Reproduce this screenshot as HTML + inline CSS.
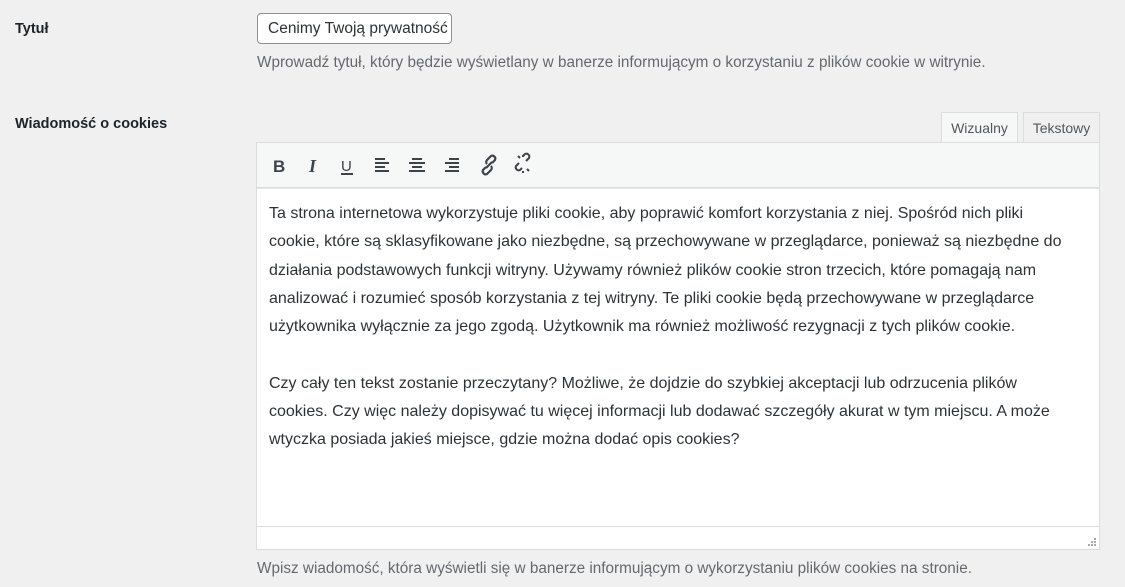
<!DOCTYPE html>
<html><head><meta charset="utf-8"><style>
body{margin:0;width:1125px;height:587px;background:#f0f0f1;font-family:"Liberation Sans",sans-serif;color:#1d2327;position:relative;overflow:hidden}
.a{position:absolute;white-space:nowrap}
.lbl{font-weight:bold;font-size:14.5px}
.desc{font-size:15.3px;color:#646970}
.input{left:257px;top:13px;width:195px;height:31px;border:1px solid #8c8f94;border-radius:4px;background:#fff;font-size:15.5px;line-height:30px;padding-left:10px;box-sizing:border-box;overflow:hidden;color:#2c3338}
.tab{top:112px;height:30px;border:1px solid #dcdcde;border-bottom:none;font-size:14px;line-height:30px;text-align:center;color:#50575e;box-sizing:border-box}
.ed{left:256px;top:142px;width:844px;height:408px;border:1px solid #dcdcde;background:#fff;box-sizing:border-box}
.tb{position:absolute;left:0;top:0;right:0;height:44px;background:#f6f7f7;border-bottom:1px solid #dcdcde;box-shadow:0 1px 0 #e6e6e6}
.txt{position:absolute;left:12px;top:57px;font-size:16px;line-height:28.3px;color:#2c3338;white-space:nowrap}
.sb{position:absolute;left:0;right:0;bottom:0;height:22px;border-top:1px solid #dcdcde;background:#fff}
svg{position:absolute}
</style></head><body>
<div class="a lbl" style="left:15px;top:21px">Tytuł</div>
<div class="a input">Cenimy Twoją prywatność</div>
<div class="a desc" style="left:257px;top:54px">Wprowadź tytuł, który będzie wyświetlany w banerze informującym o korzystaniu z plików cookie w witrynie.</div>
<div class="a lbl" style="left:15px;top:116px">Wiadomość o cookies</div>
<div class="a tab" style="left:941px;width:77px;background:#f6f7f7;height:31px">Wizualny</div>
<div class="a tab" style="left:1023px;width:77px;background:#f0f0f1">Tekstowy</div>
<div class="a ed">
<div class="tb">
<svg width="844" height="46" viewBox="0 0 844 46" fill="none" stroke="#3c434a" stroke-width="2">
<text x="16" y="29" font-family="Liberation Sans" font-weight="bold" font-size="17" fill="#3c434a" stroke="none">B</text>
<text x="52" y="29" font-family="Liberation Serif" font-style="italic" font-weight="bold" font-size="18" fill="#3c434a" stroke="none">I</text>
<text x="84" y="28" font-family="Liberation Sans" font-size="15" fill="#3c434a" stroke="none">U</text>
<line x1="84" y1="31" x2="96" y2="31"/>
<path d="M118 16h10M118 20h14M118 24h10M118 28h14"/>
<path d="M155 16h10M152 20h16M155 24h10M152 28h16"/>
<path d="M192 16h10M188 20h14M192 24h10M188 28h14"/>
<path d="M229 24l-3 3a3 3 0 0 0 4 4l4-4a3 3 0 0 0 0-4M235 20l3-3a3 3 0 0 0-4-4l-4 4a3 3 0 0 0 0 4M229 25l6-6" stroke-width="2.2"/>
<path d="M262 20l-3 3a3 3 0 0 0 4 4l2-2M269 18l3-3a3 3 0 0 0-4-4l-2 2M263 15l-2-2M270 26l2 2M266 14v-2M266 28v2" stroke-width="2"/>
</svg></div>
<div class="txt">Ta strona internetowa wykorzystuje pliki cookie, aby poprawić komfort korzystania z niej. Spośród nich pliki<br>cookie, które są sklasyfikowane jako niezbędne, są przechowywane w przeglądarce, ponieważ są niezbędne do<br>działania podstawowych funkcji witryny. Używamy również plików cookie stron trzecich, które pomagają nam<br>analizować i rozumieć sposób korzystania z tej witryny. Te pliki cookie będą przechowywane w przeglądarce<br>użytkownika wyłącznie za jego zgodą. Użytkownik ma również możliwość rezygnacji z tych plików cookie.<br><br>Czy cały ten tekst zostanie przeczytany? Możliwe, że dojdzie do szybkiej akceptacji lub odrzucenia plików<br>cookies. Czy więc należy dopisywać tu więcej informacji lub dodawać szczegóły akurat w tym miejscu. A może<br>wtyczka posiada jakieś miejsce, gdzie można dodać opis cookies?</div>
<div class="sb"><svg width="12" height="12" style="right:2px;bottom:2px" viewBox="0 0 12 12" fill="#a7aaad"><rect x="9" y="3" width="2" height="2"/><rect x="6" y="6" width="2" height="2"/><rect x="9" y="6" width="2" height="2"/><rect x="3" y="9" width="2" height="2"/><rect x="6" y="9" width="2" height="2"/><rect x="9" y="9" width="2" height="2"/></svg></div>
</div>
<div class="a desc" style="left:257px;top:560px">Wpisz wiadomość, która wyświetli się w banerze informującym o wykorzystaniu plików cookies na stronie.</div>
</body></html>
